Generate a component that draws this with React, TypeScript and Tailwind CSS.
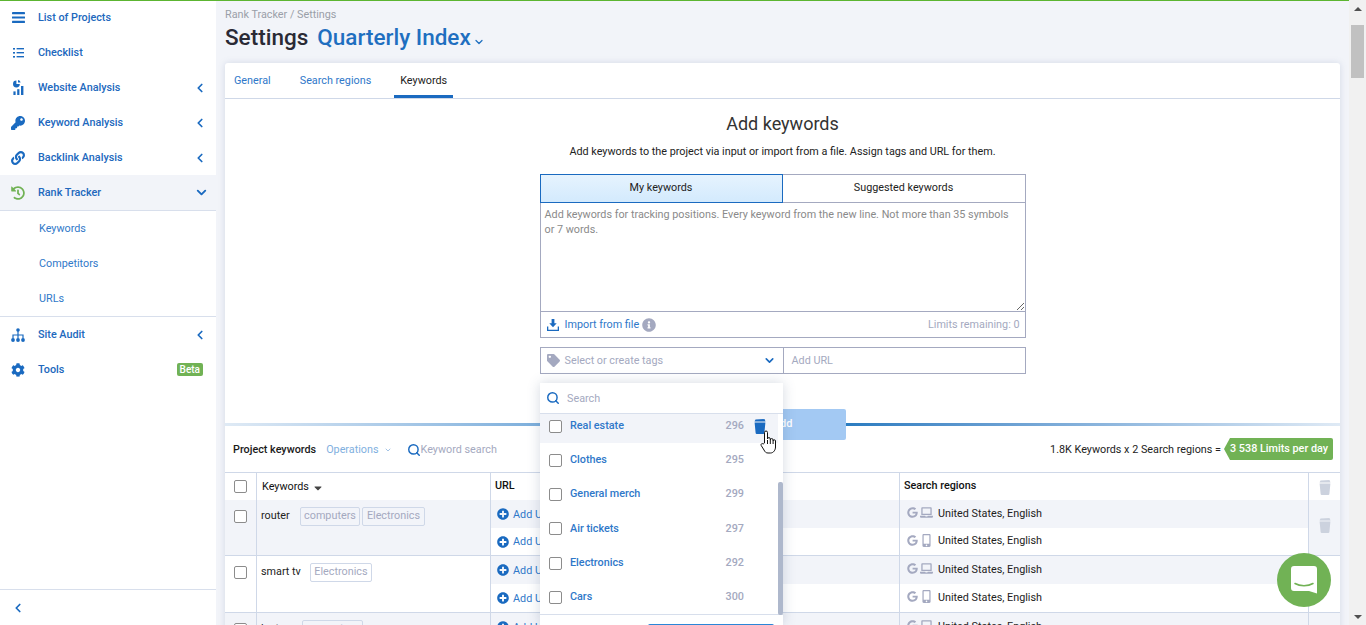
import React from "react";
import { ChevronLeft, ChevronDown, Search } from "lucide-react";
import { FaKey, FaLink, FaCog, FaHistory, FaTag, FaPlusCircle, FaGoogle, FaLaptop, FaMobileAlt, FaInfoCircle, FaCaretDown } from "react-icons/fa";

const Burger = () => (
  <svg width="13" height="11" viewBox="0 0 13 11" fill="#1a6ac0"><rect width="13" height="2.2" y="0" rx=".4" /><rect width="13" height="2.2" y="4.4" rx=".4" /><rect width="13" height="2.2" y="8.8" rx=".4" /></svg>
);
const ListIcon = () => (
  <svg width="11" height="10" viewBox="0 0 11 10" fill="#1a6ac0"><rect width="2" height="1.6" y="0" /><rect x="3.6" width="7.4" height="1.4" y="0" /><rect width="2" height="1.6" y="4" /><rect x="3.6" width="7.4" height="1.4" y="4" /><rect width="2" height="1.6" y="8" /><rect x="3.6" width="7.4" height="1.4" y="8" /></svg>
);
const ChartIcon = () => (
  <svg width="11" height="15" viewBox="0 0 11 15" fill="#1a6ac0"><path d="M3.4 0.6v3.4h3.4a3.4 3.4 0 1 1-3.4-3.4z" /><path d="M5 0a3 3 0 0 1 2.6 2.6h-2.6z" /><rect x="0.4" y="11.4" width="2.2" height="3.6" /><rect x="4.2" y="9.2" width="2.2" height="5.8" /><rect x="8" y="6" width="2.4" height="9" /></svg>
);
const SiteMap = () => (
  <svg width="14" height="14" viewBox="0 0 14 14" fill="#1a6ac0">
    <circle cx="7" cy="2" r="1.800" /><circle cx="2" cy="12" r="1.900" /><circle cx="7" cy="12" r="1.900" /><circle cx="12" cy="12" r="1.900" />
    <path d="M6.400 3h1.200v3.400h5v4h-1.200V7.600H7.600v2.800H6.400V7.600H2.600v2.800H1.400v-4h5z" />
  </svg>
);
const ImportIcon = () => (
  <svg width="12" height="12" viewBox="0 0 12 12" fill="#1a6ac0">
    <path d="M4.600 0h2.800v4.200h2.300L6 8.200 2.300 4.200h2.300z" />
    <path d="M0 7.500h1.300v3.200h9.400V7.500H12V12H0z" />
  </svg>
);
const Trash = ({ color, w = 12, h = 15 }: { color: string; w?: number; h?: number }) => (
  <svg width={w} height={h} viewBox="0 0 12 15" fill={color}><path d="M1.5 .6 10.5 0 11.5 2.4H.5z" /><path d="M.6 3.4h10.8l-1 10.4a1.2 1.2 0 0 1-1.2 1.2H2.8a1.2 1.2 0 0 1-1.2-1.2z" /></svg>
);
const Hand = () => (
  <svg width="17" height="24" viewBox="0 0 17 24" fill="#fff" stroke="#111" strokeWidth="1">
    <path d="M4.5 13V2.5a1.5 1.5 0 0 1 3 0V9a1.4 1.4 0 0 1 2.8 0v1a1.4 1.4 0 0 1 2.8 0v1a1.2 1.2 0 0 1 2.4 0v6c0 3-2 6-5 6H8c-2 0-3-1-4-3l-2.8-4.500c-.8-1.500 1-2.500 2-1.500z" />
    <path d="M7.500 10v4M10.300 10v4M13.100 11v3" fill="none" />
  </svg>
);

const Chev = () => <ChevronLeft size={14} strokeWidth={3} className="text-[#1a6ac0]" />;

function NavRow({ icon, label, right, active }: { icon: React.ReactNode; label: string; right?: React.ReactNode; active?: boolean }) {
  return (
    <div className={`flex h-[35px] items-center pl-[11px] pr-[9px] ${active ? "bg-[#f2f4f9]" : ""}`}>
      <span className="flex w-[27px] items-center">
        <span className="flex w-[14px] justify-center">{icon}</span>
      </span>
      <span className="mt-px flex-1 text-[10.8px] font-medium text-[#2168bd]">{label}</span>
      {right}
    </div>
  );
}

function Sidebar() {
  return (
    <aside className="flex h-full w-[216px] shrink-0 flex-col bg-white">
      <NavRow icon={<Burger />} label="List of Projects" />
      <NavRow icon={<ListIcon />} label="Checklist" />
      <NavRow icon={<ChartIcon />} label="Website Analysis" right={<Chev />} />
      <NavRow icon={<FaKey size={14} color="#1a6ac0" />} label="Keyword Analysis" right={<Chev />} />
      <NavRow icon={<FaLink size={14} color="#1a6ac0" />} label="Backlink Analysis" right={<Chev />} />
      <NavRow icon={<FaHistory size={14} color="#71b255" />} label="Rank Tracker" active right={<ChevronDown size={15} strokeWidth={3} className="-mr-[2px] text-[#1a6ac0]" />} />
      <div className="border-y border-[#d8dfec]">
        {["Keywords", "Competitors", "URLs"].map((s) => (
          <div key={s} className="flex h-[35px] items-center pl-[39px] pt-[2px] text-[10.8px] text-[#3079c9]">{s}</div>
        ))}
      </div>
      <NavRow icon={<SiteMap />} label="Site Audit" right={<Chev />} />
      <NavRow
        icon={<FaCog size={14} color="#1a6ac0" />}
        label="Tools"
        right={<span className="mr-[4px] rounded-[2px] bg-[#71b255] px-[3px] text-[10px] font-medium leading-[13px] text-white">Beta</span>}
      />
      <div className="mt-auto flex h-[36px] items-center border-t border-[#d8dfec] pl-[11px]">
        <ChevronLeft size={14} strokeWidth={3} className="text-[#1a6ac0]" />
      </div>
    </aside>
  );
}

function Check() {
  return <span className="block h-[13px] w-[13px] shrink-0 rounded-[2px] border border-[#8c8c8c] bg-white" />;
}

function Tag({ t }: { t: string }) {
  return <span className="inline-block h-[19px] rounded-[2px] border border-[#cfd8e8] px-[3.5px] text-[10.8px] leading-[16px] text-[#a4a9c0]">{t}</span>;
}

function SubRow({ gray, mobile, h }: { gray: boolean; mobile: boolean; h: string }) {
  return (
    <div className={`flex items-center ${h} ${gray ? "bg-[#f2f4f9]" : "bg-white"}`}>
      <div className="flex h-full w-[409px] items-center border-r border-[#cfd8e8] pl-[6px] text-[10.8px] text-[#2f78c9]">
        <FaPlusCircle size={12} color="#1a6ac0" className="mr-[4px]" />
        <span className="mt-[2px]">Add URL</span>
      </div>
      <div className="flex h-full w-[409px] items-center border-r border-[#cfd8e8] pl-[7px] text-[10.8px] text-[#222]">
        <FaGoogle size={11} color="#a4a9c0" className="-mt-[3px] mr-[1px]" />
        <span className="-mt-[3px] mr-[5px] flex w-[14px] justify-center">
          {mobile ? <FaMobileAlt size={13} color="#a4a9c0" /> : <FaLaptop size={13} color="#a4a9c0" />}
        </span>
        <span>United States, English</span>
      </div>
    </div>
  );
}

function KeywordRow({ name, tags, gray, pr, trash, firstH, secondH }: { name: string; tags: string[]; gray: boolean; pr: number; trash?: boolean; firstH: string; secondH: string }) {
  return (
    <div className={`flex border-b border-[#cfd8e8] ${gray ? "bg-[#f2f4f9]" : "bg-white"}`}>
      <div className="flex w-[32px] justify-center border-r border-[#cfd8e8] pt-[10px]"><Check /></div>
      <div className="flex w-[233px] items-start pl-[4px] pt-[7px] text-[10.8px] text-[#222]">
        <span className="leading-[18px]" style={{ marginRight: pr }}>{name}</span>
        <span className="flex gap-[2px]">{tags.map((t) => <Tag key={t} t={t} />)}</span>
      </div>
      <div className="flex flex-col border-l border-[#cfd8e8]">
        <SubRow gray mobile={false} h={firstH} />
        <SubRow gray={false} mobile h={secondH} />
      </div>
      <div className={`flex flex-1 justify-center pt-[18px] ${gray ? "bg-[#f2f4f9]" : "bg-white"}`}>
        {trash && <Trash color="#ccd2de" />}
      </div>
    </div>
  );
}

function KeywordsForm() {
  return (
    <div className="flex flex-col items-center pt-[13px]">
      <h2 className="text-[18px] font-normal leading-[24px] text-[#333]">Add keywords</h2>
      <p className="mt-[8px] text-[10.8px] leading-[16px] text-[#222]">Add keywords to the project via input or import from a file. Assign tags and URL for them.</p>
      <div className="mt-[14px] w-[486px] text-[10.8px]">
        <div className="flex h-[29px] rounded-t-[2px]">
          <div className="flex w-[243px] items-center justify-center border border-[#1a6ac0] bg-gradient-to-b from-[#e6f3fe] to-[#d3eafd] text-[#222]">My keywords</div>
          <div className="flex flex-1 items-center justify-center border border-l-0 border-[#a4a9c0] text-[#222]">Suggested keywords</div>
        </div>
        <div className="border-x border-b border-[#a4a9c0]">
          <textarea
            readOnly
            className="block h-[109px] w-full border-b border-[#a4a9c0] p-[4px] text-[10.8px] leading-[15px] outline-none placeholder:text-[#8a8a8a]"
            placeholder="Add keywords for tracking positions. Every keyword from the new line. Not more than 35 symbols or 7 words."
          />
          <div className="flex h-[25px] items-center pl-[6px] pr-[5px]">
            <ImportIcon />
            <span className="ml-[6px] mt-[2px] text-[#2f78c9]">Import from file</span>
            <FaInfoCircle size={14} color="#a4a9c0" className="ml-[3px]" />
            <span className="ml-auto mt-[2px] text-[#a4a9c0]">Limits remaining: 0</span>
          </div>
        </div>
        <div className="mt-[9px] flex h-[27px] border border-[#a4a9c0] text-[#a4a9c0]">
          <div className="flex w-[243px] items-center border-r border-[#a4a9c0] pl-[6px] pr-[7px]">
            <FaTag size={13} color="#a4a9c0" className="mr-[5px]" />
            <span className="mt-[2px]">Select or create tags</span>
            <ChevronDown size={13} strokeWidth={3} className="ml-auto text-[#1a6ac0]" />
          </div>
          <div className="flex items-center pl-[8px] pt-[2px]">Add URL</div>
        </div>
      </div>
      <div className="mt-[35px] flex h-[31px] w-full items-center">
        <div className="h-[3px] flex-1 bg-gradient-to-r from-[#dfeaf5] to-[#3f8ccb]" />
        <div className="flex h-full w-[126px] items-center justify-center rounded-[2px] bg-[#a3c9f3] text-[11px] font-medium text-white">Add</div>
        <div className="h-[3px] flex-1 bg-gradient-to-r from-[#2a7cc0] to-[#dfeaf5]" />
      </div>
    </div>
  );
}

function KeywordsTable() {
  return (
    <div className="text-[10.8px]">
      <div className="flex h-[33px] items-center border-b border-[#cfd8e8] pb-[12px] pl-[8px] pr-[7px]">
        <span className="font-medium text-[#1a1a1a]">Project keywords</span>
        <span className="ml-[10px] text-[#7fb0e0]">Operations</span>
        <ChevronDown size={8} strokeWidth={3} className="ml-[5px] text-[#a4c4e6]" />
        <Search size={14} strokeWidth={2.5} className="ml-[15px] text-[#1a6ac0]" />
        <span className="text-[#a4a9c0]">Keyword search</span>
        <span className="ml-auto mr-[3px] text-[#222]">1.8K Keywords x 2 Search regions =</span>
        <span className="-mt-[2px] flex h-[22px] w-[109px] items-center justify-end whitespace-nowrap rounded-r-[2px] bg-[#71b255] pr-[5px] font-medium text-white [clip-path:polygon(6px_0,100%_0,100%_100%,6px_100%,0_50%)]">3 538 Limits per day</span>
      </div>
      <div className="flex h-[27px] bg-white text-[#111]">
        <div className="flex w-[32px] justify-center border-r border-[#cfd8e8] pt-[7px]"><Check /></div>
        <div className="flex w-[233px] items-center pl-[5px] pt-[2px]">Keywords<FaCaretDown size={12} color="#444" className="ml-[3px]" /></div>
        <div className="flex w-[410px] items-center border-x border-[#cfd8e8] pl-[4px] font-medium"><span className="font-medium">URL</span></div>
        <div className="flex w-[409px] items-center border-r border-[#cfd8e8] pl-[4px] font-medium">Search regions</div>
        <div className="flex flex-1 justify-center pt-[7px]"><Trash color="#ccd2de" /></div>
      </div>
      <KeywordRow name="router" tags={["computers", "Electronics"]} gray pr={10} trash firstH="h-[28px]" secondH="h-[27px]" />
      <KeywordRow name="smart tv" tags={["Electronics"]} gray={false} pr={9} firstH="h-[28px]" secondH="h-[28px]" />
      <KeywordRow name="laptop" tags={["computers"]} gray pr={11} trash firstH="h-[28px]" secondH="h-[28px]" />
    </div>
  );
}

const items: [string, number][] = [["Clothes", 295], ["General merch", 299], ["Air tickets", 297], ["Electronics", 292], ["Cars", 300]];

function TagDropdown() {
  return (
    <div className="absolute left-[540px] top-[383px] z-10 h-[242px] w-[243px] overflow-hidden bg-white text-[10.8px] shadow-[0_0_12px_rgba(60,80,120,0.22)]">
      <div className="flex h-[31px] items-center border-b border-[#d8dfec] pl-[6px] text-[#a4a9c0]">
        <Search size={14} strokeWidth={2.5} className="mr-[7px] text-[#1a6ac0]" />
        <span className="mt-[2px]">Search</span>
      </div>
      <div className="relative border-b border-[#d8dfec]">
        <div className="flex h-[29px] w-[238px] items-center bg-[#f2f4f9] pb-[4px] pl-[9px] pr-[12px]">
          <Check />
          <span className="ml-[8px] flex-1 font-medium text-[#2f78c9]">Real estate</span>
          <span className="mr-[10px] font-medium text-[#a4a9c0]">296</span>
          <Trash color="#1a6ac0" />
        </div>
        {items.map(([n, c]) => (
          <div key={n} className="flex h-[34.3px] w-[238px] items-center pl-[9px] pr-[34px]">
            <Check />
            <span className="ml-[8px] flex-1 font-medium text-[#2f78c9]">{n}</span>
            <span className="font-medium text-[#a4a9c0]">{c}</span>
          </div>
        ))}
        <div className="absolute right-0 top-[68px] h-[133px] w-[5px] rounded-[2px] bg-[#aeb8cc]" />
      </div>
      <div className="ml-[108px] mt-[9px] h-[20px] w-[126px] rounded-[2px] bg-[#2a86d8]" />
    </div>
  );
}

export default function App() {
  return (
    <div className="relative flex h-[625px] w-[1366px] overflow-hidden bg-[#f2f4f9] [font-family:Roboto,sans-serif]">
      <div className="absolute left-0 top-0 z-20 h-px w-[1349px] bg-[#5cb531]" />
      <Sidebar />
      <main className="flex-1 overflow-hidden px-[9px]">
        <div className="pt-[7px] text-[10.8px] leading-[15px] text-[#9a9fa8]">Rank Tracker / Settings</div>
        <div className="flex h-[31px] items-center">
          <h1 className="text-[22.5px] font-medium text-[#2a2a35]">Settings</h1>
          <span className="ml-[9px] text-[22.5px] font-medium text-[#1f6fc0]">Quarterly Index</span>
          <ChevronDown size={12} strokeWidth={2.5} className="ml-[2px] mt-[9px] text-[#1f6fc0]" />
        </div>
        <div className="mt-[10px] overflow-hidden rounded-t-[3px] bg-white shadow-[0_0_6px_rgba(120,140,180,0.25)]">
          <div className="flex h-[36px] border-b border-[#cfd8e8] pl-[3px] text-[10.8px]">
            <div className="flex h-[35px] items-center px-[6px] pt-[2px] text-[#2f78c9]">General</div>
            <div className="ml-[17px] flex h-[35px] items-center px-[6px] pt-[2px] text-[#2f78c9]">Search regions</div>
            <div className="ml-[17px] flex h-[35px] items-center border-b-[3px] border-[#1a6ac0] px-[6px] pt-[5px] text-[#222]">Keywords</div>
          </div>
          <KeywordsForm />
          <KeywordsTable />
        </div>
      </main>
      <div className="flex h-full w-[17px] shrink-0 flex-col items-center bg-[#f1f1f1]">
        <span className="mt-[7px] h-0 w-0 border-x-[4px] border-b-[4px] border-x-transparent border-b-[#505050]" />
        <span className="mt-[14px] h-[53px] w-[13px] bg-[#c1c1c1]" />
        <span className="mb-[6px] mt-auto h-0 w-0 border-x-[4px] border-t-[4px] border-x-transparent border-t-[#505050]" />
      </div>
      <TagDropdown />
      <div className="absolute left-[760px] top-[430px] z-30"><Hand /></div>
      <div className="absolute left-[1277px] top-[553px] z-30 flex h-[54px] w-[54px] items-center justify-center rounded-full bg-[#71b255]">
        <svg width="26" height="28" viewBox="0 0 26 28">
          <path d="M3 0h20a3 3 0 0 1 3 3v24.500l-8-2.500H3a3 3 0 0 1-3-3V3a3 3 0 0 1 3-3z" fill="#fff" />
          <path d="M4 17.500c5 3 13 3 18 0" stroke="#71b255" strokeWidth="1.500" fill="none" strokeLinecap="round" />
        </svg>
      </div>
    </div>
  );
}
